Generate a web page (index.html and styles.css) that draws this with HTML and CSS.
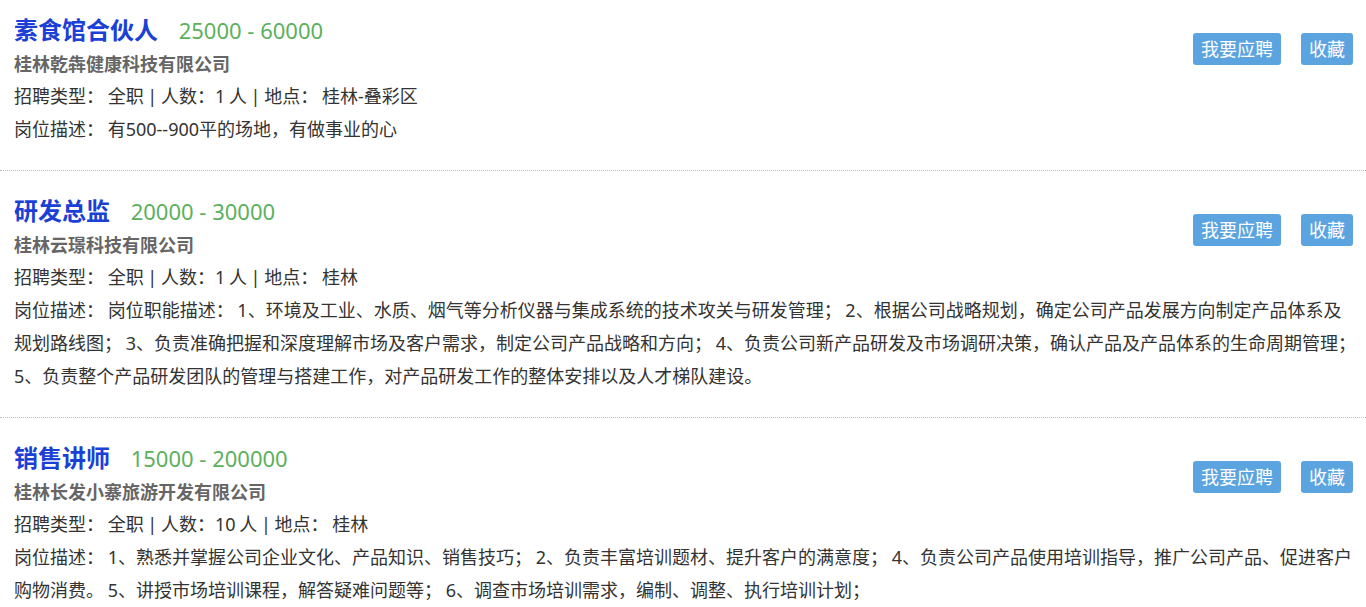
FILE: index.html
```html
<!DOCTYPE html>
<html lang="zh-CN">
<head>
    <meta charset="UTF-8">
    <meta name="viewport" content="width=device-width, initial-scale=1.0">
    <title>职位列表</title>
    <link rel="stylesheet" href="styles.css">
</head>
<body>

<div class="job-list">
    <div class="job">
        <div class="job-actions">
            <a class="btn" href="#">我要应聘</a>
            <a class="btn" href="#">收藏</a>
        </div>
        <div class="job-head">
            <span class="job-title">素食馆合伙人</span>
            <span class="job-salary">25000 - 60000</span>
        </div>
        <div class="job-company">桂林乾犇健康科技有限公司</div>
        <p class="job-info">招聘类型： 全职 | 人数：1 人 | 地点： 桂林-叠彩区</p>
        <p class="job-desc">岗位描述： 有500--900平的场地，有做事业的心</p>
    </div>

    <div class="job">
        <div class="job-actions">
            <a class="btn" href="#">我要应聘</a>
            <a class="btn" href="#">收藏</a>
        </div>
        <div class="job-head">
            <span class="job-title">研发总监</span>
            <span class="job-salary">20000 - 30000</span>
        </div>
        <div class="job-company">桂林云璟科技有限公司</div>
        <p class="job-info">招聘类型： 全职 | 人数：1 人 | 地点： 桂林</p>
        <p class="job-desc">岗位描述： 岗位职能描述： 1、环境及工业、水质、烟气等分析仪器与集成系统的技术攻关与研发管理； 2、根据公司战略规划，确定公司产品发展方向制定产品体系及规划路线图； 3、负责准确把握和深度理解市场及客户需求，制定公司产品战略和方向； 4、负责公司新产品研发及市场调研决策，确认产品及产品体系的生命周期管理； 5、负责整个产品研发团队的管理与搭建工作，对产品研发工作的整体安排以及人才梯队建设。</p>
    </div>

    <div class="job">
        <div class="job-actions">
            <a class="btn" href="#">我要应聘</a>
            <a class="btn" href="#">收藏</a>
        </div>
        <div class="job-head">
            <span class="job-title">销售讲师</span>
            <span class="job-salary">15000 - 200000</span>
        </div>
        <div class="job-company">桂林长发小寨旅游开发有限公司</div>
        <p class="job-info">招聘类型： 全职 | 人数：10 人 | 地点： 桂林</p>
        <p class="job-desc">岗位描述： 1、熟悉并掌握公司企业文化、产品知识、销售技巧； 2、负责丰富培训题材、提升客户的满意度； 4、负责公司产品使用培训指导，推广公司产品、促进客户购物消费。 5、讲授市场培训课程，解答疑难问题等； 6、调查市场培训需求，编制、调整、执行培训计划；</p>
    </div>
</div>

</body>
</html>
```

FILE: styles.css
```css
body {
    margin: 0;
    font-family: "Noto Sans", "Noto Sans CJK SC", sans-serif;
    font-size: 18px;
    color: #333;
    background: #fff;
}
.job {
    padding: 22px 10px 24px 14px;
    border-bottom: 1px dotted #bbb;
}
.job:first-child { padding-top: 12px; }
.job-actions {
    float: right;
    display: flex;
    gap: 20px;
    margin: 21px 3px 0 0;
}
.btn {
    display: block;
    height: 32px;
    line-height: 32px;
    padding: 0 8px;
    background-color: #5ba4e0;
    color: #fff;
    font-size: 18px;
    text-decoration: none;
    border-radius: 3px;
}
.job-head {
    height: 36px;
    line-height: 36px;
}
.job-title {
    font-size: 24px;
    font-weight: bold;
    color: #1b40d6;
    margin-right: 16px;
}
.job-salary {
    font-size: 22px;
    color: #5cb05c;
}
.job-company {
    line-height: 32px;
    font-size: 18px;
    font-weight: bold;
    color: #666;
}
.job-info, .job-desc {
    margin: 0;
    line-height: 33px;
    word-spacing: -1px;
}
```
